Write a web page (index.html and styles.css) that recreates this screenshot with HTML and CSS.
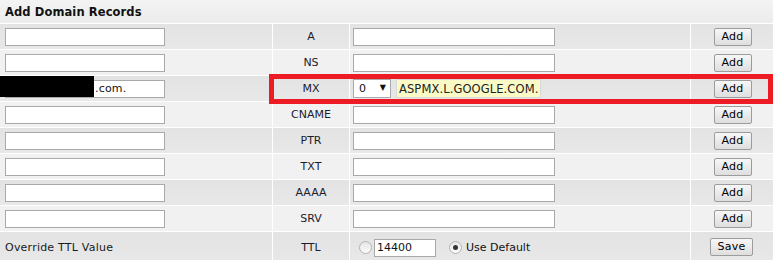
FILE: index.html
```html
<!DOCTYPE html>
<html>
<head>
<meta charset="utf-8">
<link rel="stylesheet" href="styles.css">
</head>
<body>
<div class="panel">
  <div class="grid">
    <div class="head">Add Domain Records</div>

    <div class="c dk c1"><input class="inp name" type="text"></div>
    <div class="c dk type">A</div>
    <div class="c dk c3"><input class="inp val" type="text"></div>
    <div class="c dk c4"><button class="btn">Add</button></div>

    <div class="c lt c1"><input class="inp name" type="text"></div>
    <div class="c lt type">NS</div>
    <div class="c lt c3"><input class="inp val" type="text"></div>
    <div class="c lt c4"><button class="btn">Add</button></div>

    <div class="c dk c1 mxname"><input class="inp name dom" type="text" value=".com."><span class="redact"></span></div>
    <div class="c dk type">MX</div>
    <div class="c dk c3 mx">
      <span class="selwrap"><select class="sel"><option>0</option></select><span class="arrow">▼</span></span>
      <input class="inp auto" type="text" value="ASPMX.L.GOOGLE.COM.">
    </div>
    <div class="c dk c4"><button class="btn">Add</button></div>

    <div class="c lt c1"><input class="inp name" type="text"></div>
    <div class="c lt type">CNAME</div>
    <div class="c lt c3"><input class="inp val" type="text"></div>
    <div class="c lt c4"><button class="btn">Add</button></div>

    <div class="c dk c1"><input class="inp name" type="text"></div>
    <div class="c dk type">PTR</div>
    <div class="c dk c3"><input class="inp val" type="text"></div>
    <div class="c dk c4"><button class="btn">Add</button></div>

    <div class="c lt c1"><input class="inp name" type="text"></div>
    <div class="c lt type">TXT</div>
    <div class="c lt c3"><input class="inp val" type="text"></div>
    <div class="c lt c4"><button class="btn">Add</button></div>

    <div class="c dk c1"><input class="inp name" type="text"></div>
    <div class="c dk type">AAAA</div>
    <div class="c dk c3"><input class="inp val" type="text"></div>
    <div class="c dk c4"><button class="btn">Add</button></div>

    <div class="c lt c1"><input class="inp name" type="text"></div>
    <div class="c lt type">SRV</div>
    <div class="c lt c3"><input class="inp val" type="text"></div>
    <div class="c lt c4"><button class="btn">Add</button></div>

    <div class="c dk c1 ttl-label">Override TTL Value</div>
    <div class="c dk type ttl">TTL</div>
    <div class="c dk c3 ttlrow">
      <span class="radio"></span>
      <input class="inp ttlval" type="text" value="14400">
      <span class="radio on"></span>
      <span class="usedef">Use Default</span>
    </div>
    <div class="c dk c4 ttl"><button class="btn save">Save</button></div>
  </div>
  <div class="highlight"></div>
</div>
</body>
</html>
```

FILE: styles.css
```css
html, body {
  margin: 0;
  padding: 0;
  background: #ffffff;
}
body {
  font-family: "DejaVu Sans", Verdana, sans-serif;
  font-size: 11px;
  color: #1a1a1a;
}
.panel {
  position: relative;
  width: 773px;
  height: 260px;
  overflow: hidden;
}
.grid {
  display: grid;
  grid-template-columns: 272px 76px 340px 82px;
  grid-template-rows: 23px repeat(8, 25px) 30px;
  column-gap: 1px;
  row-gap: 1px;
  background: #ffffff;
}
.head {
  grid-column: 1 / -1;
  background: linear-gradient(#f3f3f3, #ececec);
  font-weight: bold;
  font-size: 11.5px;
  letter-spacing: 0.1px;
  color: #111;
  padding-left: 5px;
  display: flex;
  align-items: center;
  padding-top: 1px;
}
.c {
  display: flex;
  align-items: center;
  min-width: 0;
}
.dk { background: linear-gradient(#e3e3e3, #e8e8e8); }
.lt { background: #f1f1f1; }
.c1 { padding-left: 5px; }
.c3 { padding-left: 3px; }
.type { justify-content: center; color: #1c1c2c; }
.c4 { justify-content: center; padding-left: 1px; }
.inp {
  box-sizing: border-box;
  height: 18px;
  border: 1px solid #a9a9a9;
  background: #fff;
  font-family: "DejaVu Sans", Verdana, sans-serif;
  font-size: 11px;
  color: #111;
  padding: 0 2px;
  margin: 0;
  outline: none;
}
.name { width: 160px; }
.val { width: 202px; }
.mxname { position: relative; }
.dom { padding-left: 89px; letter-spacing: 0.2px; }
.redact {
  position: absolute;
  left: 0;
  top: 0;
  width: 94px;
  height: 21px;
  background: #000;
}
.mx { gap: 5px; }
.selwrap {
  position: relative;
  display: inline-block;
  width: 38px;
  height: 19px;
}
.sel {
  appearance: none;
  -webkit-appearance: none;
  box-sizing: border-box;
  width: 38px;
  height: 19px;
  border: 1px solid #a9a9a9;
  border-radius: 0;
  background: #fff;
  font-family: "DejaVu Sans", Verdana, sans-serif;
  font-size: 11px;
  color: #111;
  padding: 0 0 0 5px;
  margin: 0;
}
.arrow {
  position: absolute;
  right: 5px;
  top: 4px;
  font-size: 8px;
  color: #111;
  pointer-events: none;
}
.auto {
  width: 145px;
  height: 19px;
  background: #fafac6;
  border-color: #d8d8d8;
  font-size: 11.5px;
  letter-spacing: 0.1px;
  padding-left: 2px;
  color: #222;
}
.btn {
  box-sizing: border-box;
  width: 38px;
  height: 18px;
  margin: 0;
  padding: 0;
  border: 1px solid #9c9c9c;
  border-radius: 2px;
  background: linear-gradient(#f7f7f7, #dedede);
  font-family: "DejaVu Sans", Verdana, sans-serif;
  font-size: 11px;
  letter-spacing: 0.3px;
  color: #000;
  line-height: 16px;
}
.save { width: 43px; margin-left: -2px; }
.ttl-label { color: #1a1a1a; padding-top: 1px; letter-spacing: 0.22px; }
.ttlrow { padding-left: 9px; padding-top: 1px; }
.radio {
  box-sizing: border-box;
  width: 13px;
  height: 13px;
  border-radius: 50%;
  border: 1px solid #b4b4b4;
  background: linear-gradient(#e6e6e6, #fbfbfb);
  display: inline-flex;
  align-items: center;
  justify-content: center;
  flex: none;
}
.radio.on::after {
  content: "";
  width: 5px;
  height: 5px;
  border-radius: 50%;
  background: #333;
}
.ttlval {
  width: 62px;
  margin-left: 2px;
  margin-right: 13px;
  font-size: 11px;
}
.usedef { margin-left: 4px; color: #111; }
.highlight {
  position: absolute;
  left: 269px;
  top: 74px;
  width: 504px;
  height: 30px;
  box-sizing: border-box;
  border: 5px solid #ed1c24;
  pointer-events: none;
}
```
